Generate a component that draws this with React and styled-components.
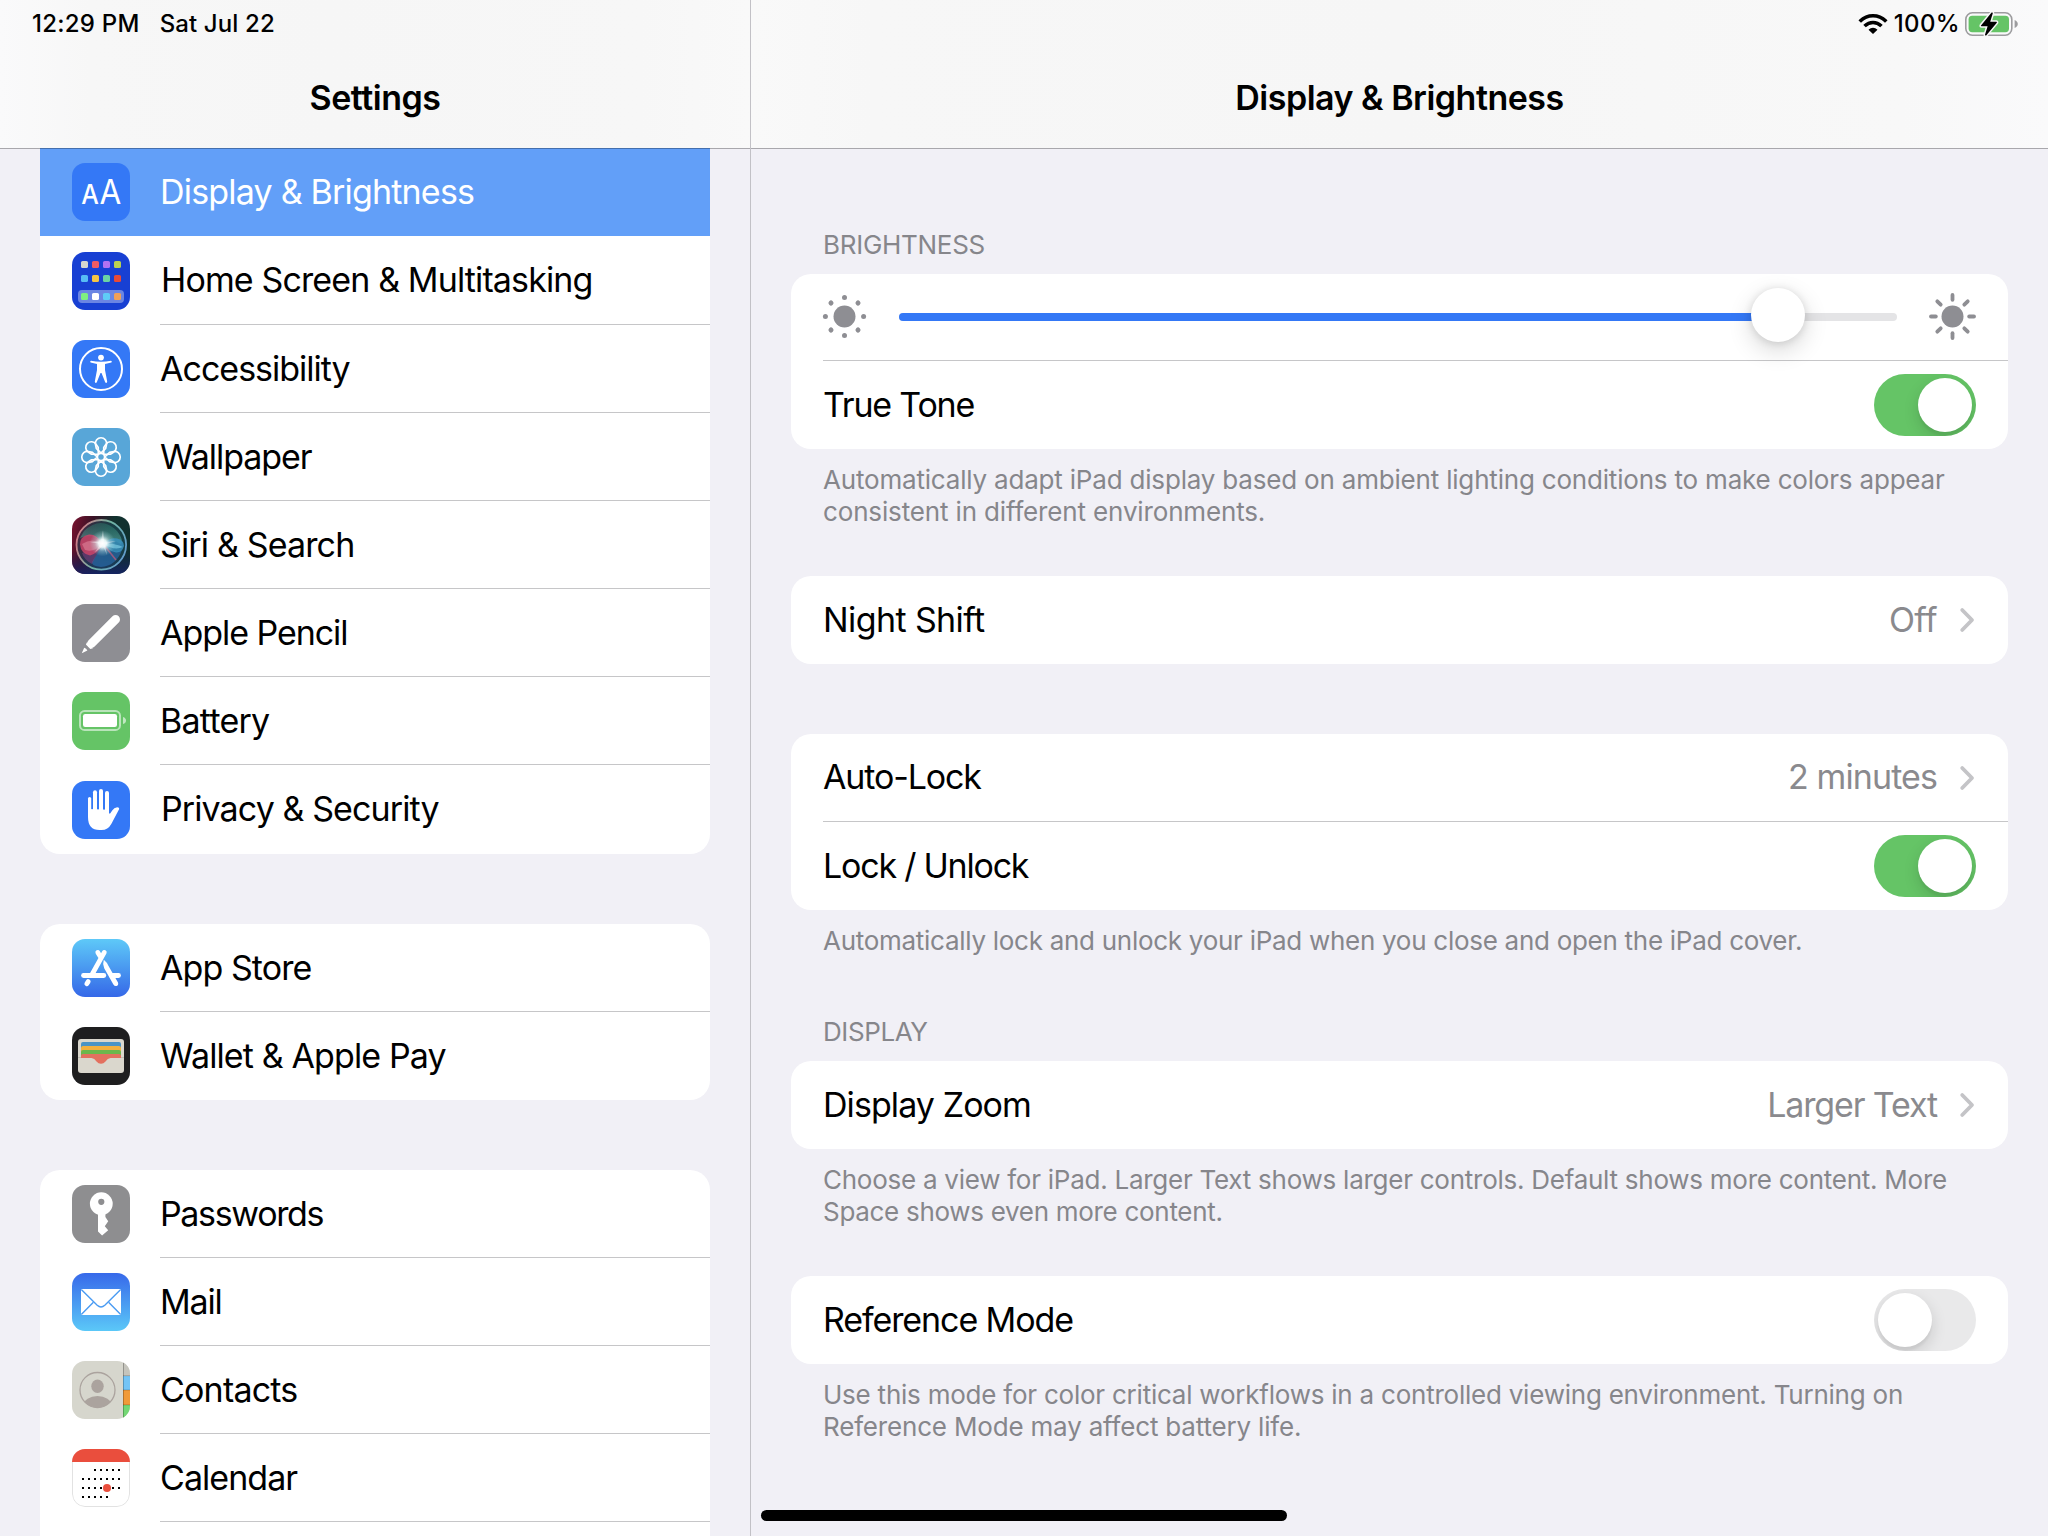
import React from "react";
import styled, { createGlobalStyle, css } from "styled-components";

const GlobalStyle = createGlobalStyle`
  *, *::before, *::after { box-sizing: border-box; }
  body {
    margin: 0;
    background: #f1f0f6;
    font-family: Inter, "Liberation Sans", sans-serif;
    font-synthesis: none;
    -webkit-font-smoothing: antialiased;
  }
`;

/* ---------- shell ---------- */

const Screen = styled.div`
  position: relative;
  display: flex;
  width: 2048px;
  height: 1536px;
  overflow: hidden;
  background: #f1f0f6;
  color: #000;
`;

const Sidebar = styled.aside`
  flex: none;
  width: 751px;
  border-right: 1px solid #c2c1c6;
`;

const Detail = styled.main`
  flex: 1;
  min-width: 0;
`;

const PaneHeader = styled.header`
  position: relative;
  z-index: 1;
  height: 149px;
  margin-bottom: -1px;
  border-bottom: 1px solid rgba(0, 0, 0, 0.3);
  background: ${(p) =>
    p.$side === "left"
      ? "linear-gradient(90deg, #fafafb 0, #f7f7f7 90px, #f6f6f6 330px, #f7f7f7 640px, #f9f9f9 750px)"
      : "linear-gradient(90deg, #f9f9f9 0, #f7f7f7 120px, #f6f6f6 50%, #f8f8f8 1150px, #fafafb 100%)"};
  background-clip: padding-box;
`;

const StatusBar = styled.div`
  display: flex;
  align-items: center;
  justify-content: ${(p) => (p.$end ? "flex-end" : "flex-start")};
  height: 48px;
  padding: ${(p) => (p.$end ? "0 29px 0 0" : "0 0 0 32px")};
  font-size: 24px;
  font-weight: 500;
  line-height: 48px;
`;

const StatusText = styled.span`
  letter-spacing: ${(p) => p.$track || 0}px;
  margin-left: ${(p) => p.$before || 0}px;
  margin-right: ${(p) => p.$after || 0}px;
  white-space: nowrap;
`;

const PaneTitle = styled.h1`
  margin: 0;
  padding-top: 29px;
  font-size: 34px;
  line-height: 42px;
  font-weight: 600;
  text-align: center;
  letter-spacing: -0.5px;
`;

/* ---------- sidebar list ---------- */

const SidebarList = styled.nav`
  display: flex;
  flex-direction: column;
  gap: 70px;
  padding: 0 40px;
`;

const MenuGroup = styled.div`
  overflow: hidden;
  background: #fff;
  border-radius: ${(p) => (p.$flushTop ? "0 0 20px 20px" : "20px")};
`;

const MenuLabel = styled.span`
  display: flex;
  flex: 1;
  align-items: center;
  align-self: stretch;
  margin-left: 30px;
  padding-bottom: 1px;
  font-size: 34px;
  white-space: nowrap;
  letter-spacing: ${(p) => p.$track}px;
  border-bottom: 1px solid ${(p) => (p.$line ? "#c6c6c8" : "transparent")};
`;

const MenuRow = styled.div`
  display: flex;
  align-items: center;
  height: ${(p) => (p.$tall ? 89 : 88)}px;
  padding-left: 32px;
  ${(p) =>
    p.$tall &&
    css`
      > svg { position: relative; top: 0.5px; }
      > span { padding-left: 1px; }
    `}
  ${(p) =>
    p.$selected &&
    css`
      background: #629ff8;
      color: #fff;
    `}
`;

const IconSvg = styled.svg`
  flex: none;
  display: block;
  width: 58px;
  height: 58px;
  border-radius: 13px;
`;

/* ---------- detail pane ---------- */

const Content = styled.div`
  padding: 0 40px;
`;

const Section = styled.section`
  padding-top: ${(p) => p.$top}px;
`;

const SectionTitle = styled.h2`
  margin: 0;
  padding: 0 0 13px 32px;
  font-size: 26px;
  line-height: 32px;
  font-weight: 400;
  color: #86868b;
  letter-spacing: ${(p) => p.$track}px;
`;

const Card = styled.div`
  background: #fff;
  border-radius: 20px;
  padding-left: 32px;
`;

const CardRow = styled.div`
  display: flex;
  align-items: center;
  height: ${(p) => (p.$short ? 87 : 88)}px;
  padding-right: 32px;
  font-size: 34px;
  ${(p) => p.$line && css` border-bottom: 1px solid #c6c6c8; `}
`;

const RowLabel = styled.span`
  flex: 1;
  padding-bottom: 2px;
  letter-spacing: ${(p) => p.$track}px;
`;

const RowValue = styled.span`
  color: #8a8a8e;
  padding-bottom: 2px;
  letter-spacing: ${(p) => p.$track}px;
  margin-right: 22px;
`;

const Note = styled.p`
  margin: 0;
  padding: 15px 0 0 32px;
  font-size: 26px;
  line-height: 32px;
  color: #86868b;
  white-space: nowrap;
`;

const NoteLine = styled.span`
  display: block;
  letter-spacing: ${(p) => p.$track}px;
`;

const Switch = styled.span`
  display: flex;
  justify-content: ${(p) => (p.$on ? "flex-end" : "flex-start")};
  width: 102px;
  height: 62px;
  padding: 4px;
  border-radius: 31px;
  overflow: hidden;
  background: ${(p) => (p.$on ? "#65c466" : "#e9e9ea")};
  &::after {
    content: "";
    width: 54px;
    height: 54px;
    border-radius: 50%;
    background: #fff;
    box-shadow: 0 6px 16px rgba(0, 0, 0, 0.14), 0 4px 2px rgba(0, 0, 0, 0.04);
  }
`;

const SliderTrack = styled.div`
  display: flex;
  align-items: center;
  flex: 1;
  height: 8px;
  margin: 0 32px 0 33px;
  border-radius: 4px;
  background: #e4e4e6;
`;

const SliderFill = styled.div`
  height: 8px;
  border-radius: 4px 0 0 4px;
  background: #3478f6;
`;

const SliderThumb = styled.div`
  flex: none;
  width: 54px;
  height: 54px;
  margin: -4px 0 0 -27px;
  border-radius: 50%;
  background: #fff;
  box-shadow: 0 8px 24px rgba(0, 0, 0, 0.16), 0 1px 8px rgba(0, 0, 0, 0.12);
`;

const HomeIndicator = styled.div`
  position: absolute;
  left: 761px;
  top: 1510px;
  width: 526px;
  height: 11px;
  border-radius: 6px;
  background: #000;
`;

const Glyph = styled.svg`
  flex: none;
  display: block;
  overflow: visible;
  margin-bottom: ${(p) => p.$lift || 0}px;
`;

/* ---------- app icons ---------- */

const Icon = ({ children }) => <IconSvg viewBox="0 0 58 58">{children}</IconSvg>;
const Fill = ({ c }) => <rect width="58" height="58" fill={c} />;

const DisplayIcon = () => (
  <Icon>
    <Fill c="#3478f6" />
    <g fill="#fff" fontFamily="Inter, sans-serif" fontWeight="500">
      <text x="9.2" y="41" fontSize="26.5" textLength="17.6" lengthAdjust="spacingAndGlyphs">A</text>
      <text x="27.4" y="41" fontSize="33.5" textLength="21.8" lengthAdjust="spacingAndGlyphs" fontWeight="400">A</text>
    </g>
  </Icon>
);

const HOME_TILES = [
  [9, ["#d5d6cf", "#ef5b63", "#b272f2", "#bad150"]],
  [23, ["#57bcf5", "#f7c544", "#6bd3a4", "#e94a37"]],
  [41, ["#7ff080", "#ffffff", "#5fccf7", "#f2a057"]],
];

const HomeIcon = () => (
  <Icon>
    <Fill c="#1840d3" />
    <rect x="6" y="38" width="46" height="13" rx="4" fill="#fff" fillOpacity="0.36" />
    {HOME_TILES.map(([y, row]) =>
      row.map((c, i) => <rect key={c} x={9 + i * 11} y={y} width="7" height="7" rx="1.6" fill={c} />)
    )}
  </Icon>
);

const AccessibilityIcon = () => (
  <Icon>
    <Fill c="#3478f6" />
    <circle cx="29" cy="29" r="21" fill="none" stroke="#fff" strokeWidth="2" />
    <circle cx="29" cy="17.6" r="2.9" fill="#fff" />
    <path
      fill="#fff"
      d="M19 20.8Q29 22.6 39 20.8Q40.6 21.2 39.4 22.6L33 24V30L35.2 41.6Q35 43.6 33.3 42.6L29.5 33H28.5L24.7 42.6Q23 43.6 22.8 41.6L25 30V24L18.6 22.6Q17.4 21.2 19 20.8Z"
    />
  </Icon>
);

const WallpaperIcon = () => (
  <Icon>
    <Fill c="#58a6d8" />
    <g fill="none" stroke="#fff" strokeWidth="1.7" strokeLinejoin="round">
      <circle cx="29" cy="29" r="3.6" />
      {[0, 45, 90, 135, 180, 225, 270, 315].map((a) => (
        <path
          key={a}
          transform={`rotate(${a} 29 29)`}
          d="M29 25.2L24.3 20.4L23.5 16.4A5.6 5.6 0 1 1 34.5 16.4L33.7 20.4Z"
        />
      ))}
    </g>
  </Icon>
);

const SiriIcon = () => (
  <Icon>
    <defs>
      <linearGradient id="siriBg" x1="0" y1="0" x2="1" y2="0.25">
        <stop offset="0" stopColor="#7d1230" />
        <stop offset="0.35" stopColor="#3a1226" />
        <stop offset="0.7" stopColor="#12322f" />
        <stop offset="1" stopColor="#10302f" />
      </linearGradient>
      <linearGradient id="siriLow" x1="0" y1="0" x2="0" y2="1">
        <stop offset="0.6" stopColor="#13215a" stopOpacity="0" />
        <stop offset="1" stopColor="#16226a" stopOpacity="0.85" />
      </linearGradient>
      <linearGradient id="siriRing" x1="0" y1="0.3" x2="1" y2="0.7">
        <stop offset="0" stopColor="#e0848f" />
        <stop offset="0.5" stopColor="#7cc3ae" />
        <stop offset="1" stopColor="#6aa8dd" />
      </linearGradient>
      <linearGradient id="siriTop" x1="0" y1="0" x2="0" y2="1">
        <stop offset="0" stopColor="#2e8f78" stopOpacity="0.5" />
        <stop offset="1" stopColor="#6fc5b6" stopOpacity="0.75" />
      </linearGradient>
      <radialGradient id="siriGlow">
        <stop offset="0" stopColor="#fff" />
        <stop offset="0.3" stopColor="#f4ffff" stopOpacity="0.92" />
        <stop offset="0.6" stopColor="#c5e6ea" stopOpacity="0.4" />
        <stop offset="1" stopColor="#a5dce0" stopOpacity="0" />
      </radialGradient>
    </defs>
    <Fill c="url(#siriBg)" />
    <Fill c="url(#siriLow)" />
    <circle cx="29.3" cy="28.8" r="24.4" fill="#23566a" fillOpacity="0.4" />
    <path d="M12 15Q29 -1 45 15Q52 24 49 28Q40 22 31 27Q22 16 8 22Z" fill="url(#siriTop)" opacity="0.7" />
    <path d="M31 28Q40 38 50 34Q44 50 29 51Q19 50 20 46Z" fill="#2b72b8" opacity="0.6" />
    <path d="M31 28Q24 39 20 48Q12 44 10 37Z" fill="#7b3f80" opacity="0.6" />
    <path d="M31 28Q25 18 17 18.5Q8 20 8 28.5Q9 38 18 39.5Q25 38 31 28Z" fill="#cb4468" opacity="0.85" />
    <path d="M10 28Q20 21 31 28Q22 37 13 34Z" fill="#e58fa5" opacity="0.5" />
    <path d="M31 28Q38 21 45 22.5Q52 24 52 30Q50 37 44 36.5Q37 35 31 28Z" fill="#3a90bd" opacity="0.85" />
    <path d="M32 28Q40 26 51 31Q42 35 32 28Z" fill="#8edcf0" opacity="0.55" />
    <path d="M32 29L44 44" stroke="#c75a7a" strokeWidth="1.6" opacity="0.7" />
    <circle cx="29.3" cy="28.8" r="24.8" fill="none" stroke="url(#siriRing)" strokeWidth="1.8" opacity="0.9" />
    <circle cx="30.6" cy="27.4" r="13" fill="url(#siriGlow)" />
    <path d="M31 14L32.2 26L44 25L33 28.6L35 39L31 30L23 36L28.6 28L18 26L29 25.6Z" fill="#fff" opacity="0.4" />
  </Icon>
);

const PencilIcon = () => (
  <Icon>
    <Fill c="#8e8e93" />
    <path d="M43.6 15.4L19.5 39.5" stroke="#fff" strokeWidth="8.8" strokeLinecap="round" />
    <path d="M13.9 40.5L15 38.2L21 44.2L18.3 45Z" fill="#fff" />
    <path d="M9.8 49.2L12.2 43.8Q14.4 44.3 15.4 46.6Z" fill="#fff" />
  </Icon>
);

const BatteryIcon = () => (
  <Icon>
    <Fill c="#65c466" />
    <rect x="8" y="19" width="40" height="19" rx="4.6" fill="none" stroke="#fff" strokeOpacity="0.55" strokeWidth="2" />
    <rect x="11" y="22" width="34" height="13" rx="2.2" fill="#fff" />
    <path d="M51 25Q54 26 54 28.5Q54 31 51 32Z" fill="#fff" fillOpacity="0.6" />
  </Icon>
);

const HandIcon = () => (
  <Icon>
    <Fill c="#3478f6" />
    <g stroke="#fff" strokeLinecap="round">
      <path d="M17.6 17.6V34" strokeWidth="3.2" />
      <path d="M23 11.2V34" strokeWidth="4" />
      <path d="M29 10.1V34" strokeWidth="4" />
      <path d="M35 12.1V34" strokeWidth="4" />
    </g>
    <path
      fill="#fff"
      d="M16 28V36Q16 49 27.5 49H29.5Q36 49 39.3 43L47.2 28Q47.6 26.2 45.2 26.2Q42 26.6 40.2 29.4L38.4 32.2Q37 33.4 37 31.5V28.8Z"
    />
  </Icon>
);

const AppStoreIcon = () => (
  <Icon>
    <defs>
      <linearGradient id="storeBg" x1="0" y1="0" x2="0" y2="1">
        <stop offset="0" stopColor="#5ec9f8" />
        <stop offset="1" stopColor="#3568e8" />
      </linearGradient>
    </defs>
    <Fill c="url(#storeBg)" />
    <g fill="none" stroke="#fff" strokeWidth="4.8" strokeLinecap="round">
      <path d="M11.5 36.5H31.8" />
      <path d="M39.5 36.5H46.5" />
      <path d="M32.3 13.4L20.3 35" />
      <path d="M25.8 13.4L28 17" />
      <path d="M16.2 42.6L14.8 44.8" />
    </g>
    <path d="M31.8 20.8Q35 23.4 36.4 26.8L46 43.4Q46.8 46 44.6 46.9Q42.6 47.4 41.4 45.4L32.2 29.2Q30.4 24.6 31.8 20.8Z" fill="#fff" />
  </Icon>
);

const WalletIcon = () => (
  <Icon>
    <Fill c="#1e1e1f" />
    <rect x="6" y="12" width="46" height="34" rx="3" fill="#dad7cd" />
    <path d="M9 31V17Q9 15 11 15H47Q49 15 49 17V31Z" fill="#4a94c6" />
    <path d="M9 31V21Q9 19 11 19H47Q49 19 49 21V31Z" fill="#f2b13f" />
    <path d="M9 31V25Q9 23 11 23H47Q49 23 49 25V31Z" fill="#6cb74c" />
    <path d="M9 31V29Q9 27 11 27H47Q49 27 49 29V31H38.5Q35.5 31.4 33.5 34.4Q31.6 36.8 29 36.8Q26.4 36.8 24.5 34.4Q22.5 31.4 19.5 31Z" fill="#e3705f" />
    <path d="M6 30.5H9M49 30.5H52" stroke="#b9b6ad" strokeWidth="0.8" />
  </Icon>
);

const KeyIcon = () => (
  <Icon>
    <Fill c="#8e8e90" />
    <circle cx="29.3" cy="18.7" r="11.4" fill="#fff" />
    <circle cx="29.3" cy="16.8" r="3.1" fill="#8e8e90" />
    <path fill="#fff" d="M26 27V46.6L30.1 50.6L36.2 45.2L32.8 41.2L36.2 36.2L33.4 32V27Z" />
  </Icon>
);

const MailIcon = () => (
  <Icon>
    <defs>
      <linearGradient id="mailBg" x1="0" y1="0" x2="0" y2="1">
        <stop offset="0" stopColor="#3769ea" />
        <stop offset="1" stopColor="#5bc8f8" />
      </linearGradient>
    </defs>
    <Fill c="url(#mailBg)" />
    <rect x="9" y="16" width="40" height="26" rx="0.8" fill="#fff" />
    <g fill="none" stroke="#4a9bf2" strokeWidth="1.4">
      <path d="M9.3 16.6L25.2 32.2Q29 35.6 32.8 32.2L48.7 16.6" />
      <path d="M9.3 41.6L21.4 29.2M48.7 41.6L36.6 29.2" />
    </g>
  </Icon>
);

const ContactsIcon = () => (
  <Icon>
    <defs>
      <clipPath id="contactClip">
        <circle cx="25.5" cy="29" r="17.6" />
      </clipPath>
    </defs>
    <Fill c="#d6d6cd" />
    <g fill="#aba39e">
      <ellipse cx="25.5" cy="25.2" rx="6.2" ry="6.8" />
      <ellipse cx="25.5" cy="44.5" rx="14" ry="9.5" clipPath="url(#contactClip)" />
    </g>
    <circle cx="25.5" cy="29" r="17.5" fill="none" stroke="#aba39e" strokeWidth="1.3" />
    <rect x="51" y="0" width="7" height="15" fill="#c5c4bc" />
    <rect x="51" y="15" width="7" height="14" fill="#74c4f6" />
    <rect x="51" y="29" width="7" height="15" fill="#f09a38" />
    <rect x="51" y="44" width="7" height="14" fill="#73d774" />
    <path d="M51.5 0V58" stroke="#000" strokeOpacity="0.25" />
    <path d="M51 14.7H58M51 29H58M51 43.9H58" stroke="#000" strokeOpacity="0.22" strokeWidth="0.9" />
  </Icon>
);

const CAL_ROWS = [
  [20, 2, 7],
  [29, 0, 7],
  [38, 0, 7],
  [47, 0, 5],
];
const CAL_COLS = [10, 16, 22, 28, 34, 40, 46];

const CalendarIcon = () => (
  <Icon>
    <Fill c="#fff" />
    <rect x="0.5" y="0.5" width="57" height="57" rx="12.5" fill="none" stroke="#e2e2e2" />
    <rect width="58" height="13" fill="#ea4e3d" />
    {CAL_ROWS.map(([y, from, to]) =>
      CAL_COLS.slice(from, to).map((x) => <rect key={`${x}-${y}`} x={x} y={y} width="2" height="2" fill="#000" />)
    )}
    <circle cx="35" cy="39" r="4" fill="#ea4e3d" />
  </Icon>
);

/* ---------- small glyphs ---------- */

const WifiGlyph = () => (
  <Glyph width="28" height="20" viewBox="0 0 28 20">
    <defs>
      <clipPath id="wifiWedge">
        <path d="M14 20L-1.5 5.5V-2H29.5V5.5Z" />
      </clipPath>
    </defs>
    <g clipPath="url(#wifiWedge)" fill="none" stroke="#000" strokeWidth="3.5">
      <circle cx="14" cy="19.8" r="18" />
      <circle cx="14" cy="19.8" r="11.4" />
      <circle cx="14" cy="19.8" r="3" strokeWidth="6" />
    </g>
  </Glyph>
);

const ChargingGlyph = () => (
  <Glyph width="54" height="24" viewBox="0 0 54 24">
    <rect x="0.8" y="0.8" width="46" height="22.4" rx="6.6" fill="none" stroke="#9c9c9e" strokeWidth="1.6" />
    <rect x="3.6" y="3.8" width="40.4" height="16.4" rx="3.6" fill="#65c466" />
    <path d="M49.6 8Q52.8 9.4 52.8 12Q52.8 14.6 49.6 16Z" fill="#9c9c9e" />
    <path
      d="M26.6 0.6L16 13.4Q15.6 14.2 16.6 14.2H22.6L20 22.8Q20 24 21.2 23.4L31.8 10.8Q32.2 9.8 31.2 9.8H25.2L27.8 1.2Q27.8 0 26.6 0.6Z"
      fill="#000"
      stroke="#f8f8f8"
      strokeWidth="3"
      paintOrder="stroke"
    />
  </Glyph>
);

const Chevron = () => (
  <Glyph width="17" height="26" viewBox="0 0 17 26">
    <path d="M3.2 3L13 13L3.2 23" fill="none" stroke="#c4c4c7" strokeWidth="3.8" strokeLinecap="round" strokeLinejoin="round" />
  </Glyph>
);

const RAYS = [0, 45, 90, 135, 180, 225, 270, 315];

const DimSun = () => (
  <Glyph $lift={1} width="43" height="43" viewBox="0 0 43 43" fill="#8e8e93">
    <circle cx="21.5" cy="21.5" r="11" />
    {RAYS.map((a) => (
      <circle key={a} cx="21.5" cy="2.4" r="2.5" transform={`rotate(${a} 21.5 21.5)`} />
    ))}
  </Glyph>
);

const BrightSun = () => (
  <Glyph $lift={2} width="47" height="47" viewBox="0 0 47 47" fill="#8e8e93">
    <circle cx="23.5" cy="23.5" r="11" />
    {RAYS.map((a) => (
      <rect key={a} x="21.6" y="0.1" width="3.8" height="8.6" rx="1.9" transform={`rotate(${a} 23.5 23.5)`} />
    ))}
  </Glyph>
);

/* ---------- data ---------- */

const MENU = [
  [
    { label: "Display & Brightness", icon: DisplayIcon, track: -0.8, selected: true },
    { label: "Home Screen & Multitasking", icon: HomeIcon, track: -0.87, tall: true },
    { label: "Accessibility", icon: AccessibilityIcon, track: -1 },
    { label: "Wallpaper", icon: WallpaperIcon, track: -1.05 },
    { label: "Siri & Search", icon: SiriIcon, track: -0.85 },
    { label: "Apple Pencil", icon: PencilIcon, track: -1.05 },
    { label: "Battery", icon: BatteryIcon, track: -0.75 },
    { label: "Privacy & Security", icon: HandIcon, track: -0.9, tall: true },
  ],
  [
    { label: "App Store", icon: AppStoreIcon, track: -0.92 },
    { label: "Wallet & Apple Pay", icon: WalletIcon, track: -0.87 },
  ],
  [
    { label: "Passwords", icon: KeyIcon, track: -1.35 },
    { label: "Mail", icon: MailIcon, track: -1.15 },
    { label: "Contacts", icon: ContactsIcon, track: -0.8 },
    { label: "Calendar", icon: CalendarIcon, track: -0.96 },
    { label: "", icon: Icon, track: 0 },
  ],
];

const BRIGHTNESS = 0.881;

export default function App() {
  return (
    <>
      <GlobalStyle />
      <Screen>
        <Sidebar>
          <PaneHeader $side="left">
            <StatusBar>
              <StatusText $track={0.25} $after={20}>12:29 PM</StatusText>
              <StatusText $track={0.13}>Sat Jul 22</StatusText>
            </StatusBar>
            <PaneTitle>Settings</PaneTitle>
          </PaneHeader>
          <SidebarList>
            {MENU.map((group, g) => (
              <MenuGroup key={g} $flushTop={g === 0}>
                {group.map(({ label, icon: RowIcon, selected, tall, track }, i) => (
                  <MenuRow key={label} $selected={selected} $tall={tall}>
                    <RowIcon />
                    <MenuLabel $track={track} $line={!selected && i < group.length - 1}>
                      {label}
                    </MenuLabel>
                  </MenuRow>
                ))}
              </MenuGroup>
            ))}
          </SidebarList>
        </Sidebar>

        <Detail>
          <PaneHeader $side="right">
            <StatusBar $end>
              <WifiGlyph />
              <StatusText $before={7} $after={5} $track={0.35}>100%</StatusText>
              <ChargingGlyph />
            </StatusBar>
            <PaneTitle>Display &amp; Brightness</PaneTitle>
          </PaneHeader>

          <Content>
            <Section $top={81}>
              <SectionTitle $track={-0.28}>BRIGHTNESS</SectionTitle>
              <Card>
                <CardRow $line $short>
                  <DimSun />
                  <SliderTrack>
                    <SliderFill style={{ width: `${BRIGHTNESS * 100}%` }} />
                    <SliderThumb />
                  </SliderTrack>
                  <BrightSun />
                </CardRow>
                <CardRow>
                  <RowLabel $track={-1.2}>True Tone</RowLabel>
                  <Switch $on />
                </CardRow>
              </Card>
              <Note>
                <NoteLine $track={-0.19}>
                  Automatically adapt iPad display based on ambient lighting conditions to make colors appear
                </NoteLine>
                <NoteLine $track={-0.15}>consistent in different environments.</NoteLine>
              </Note>
            </Section>

            <Section $top={48}>
              <Card>
                <CardRow>
                  <RowLabel $track={-0.6}>Night Shift</RowLabel>
                  <RowValue $track={-0.6}>Off</RowValue>
                  <Chevron />
                </CardRow>
              </Card>
            </Section>

            <Section $top={70}>
              <Card>
                <CardRow $line>
                  <RowLabel $track={-1.15}>Auto-Lock</RowLabel>
                  <RowValue $track={-0.9}>2 minutes</RowValue>
                  <Chevron />
                </CardRow>
                <CardRow>
                  <RowLabel $track={-1.22}>Lock / Unlock</RowLabel>
                  <Switch $on />
                </CardRow>
              </Card>
              <Note>
                <NoteLine $track={-0.28}>
                  Automatically lock and unlock your iPad when you close and open the iPad cover.
                </NoteLine>
              </Note>
            </Section>

            <Section $top={59}>
              <SectionTitle $track={-0.4}>DISPLAY</SectionTitle>
              <Card>
                <CardRow>
                  <RowLabel $track={-0.92}>Display Zoom</RowLabel>
                  <RowValue $track={-1.13}>Larger Text</RowValue>
                  <Chevron />
                </CardRow>
              </Card>
              <Note>
                <NoteLine $track={-0.256}>
                  Choose a view for iPad. Larger Text shows larger controls. Default shows more content. More
                </NoteLine>
                <NoteLine $track={-0.3}>Space shows even more content.</NoteLine>
              </Note>
            </Section>

            <Section $top={48}>
              <Card>
                <CardRow>
                  <RowLabel $track={-1.1}>Reference Mode</RowLabel>
                  <Switch />
                </CardRow>
              </Card>
              <Note>
                <NoteLine $track={-0.23}>
                  Use this mode for color critical workflows in a controlled viewing environment. Turning on
                </NoteLine>
                <NoteLine $track={-0.18}>Reference Mode may affect battery life.</NoteLine>
              </Note>
            </Section>
          </Content>
        </Detail>

        <HomeIndicator />
      </Screen>
    </>
  );
}
